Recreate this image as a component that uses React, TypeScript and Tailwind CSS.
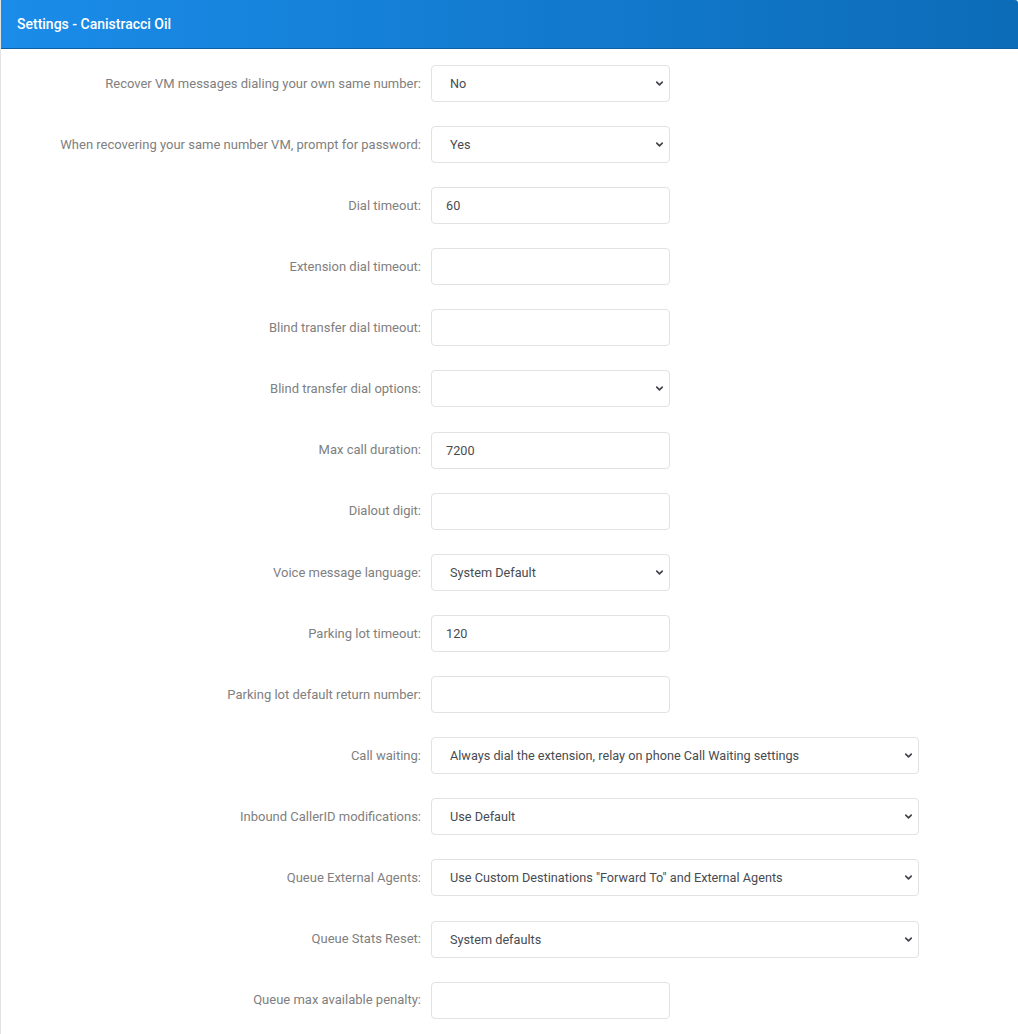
import { ChevronDown } from "lucide-react";

type Field = {
  label: string;
  kind: "select" | "input";
  value: string;
  wide?: boolean;
};

const fields: Field[] = [
  { label: "Recover VM messages dialing your own same number:", kind: "select", value: "No" },
  { label: "When recovering your same number VM, prompt for password:", kind: "select", value: "Yes" },
  { label: "Dial timeout:", kind: "input", value: "60" },
  { label: "Extension dial timeout:", kind: "input", value: "" },
  { label: "Blind transfer dial timeout:", kind: "input", value: "" },
  { label: "Blind transfer dial options:", kind: "select", value: "" },
  { label: "Max call duration:", kind: "input", value: "7200" },
  { label: "Dialout digit:", kind: "input", value: "" },
  { label: "Voice message language:", kind: "select", value: "System Default" },
  { label: "Parking lot timeout:", kind: "input", value: "120" },
  { label: "Parking lot default return number:", kind: "input", value: "" },
  {
    label: "Call waiting:",
    kind: "select",
    value: "Always dial the extension, relay on phone Call Waiting settings",
    wide: true,
  },
  { label: "Inbound CallerID modifications:", kind: "select", value: "Use Default", wide: true },
  {
    label: "Queue External Agents:",
    kind: "select",
    value: 'Use Custom Destinations "Forward To" and External Agents',
    wide: true,
  },
  { label: "Queue Stats Reset:", kind: "select", value: "System defaults", wide: true },
  { label: "Queue max available penalty:", kind: "input", value: "" },
];

const FieldRow = ({ field }: { field: Field }) => {
  const width = field.wide ? "w-[488px]" : "w-[239px]";
  return (
    <div className="flex items-center">
      <label className="w-[430px] shrink-0 pr-[10px] text-right text-[13px] text-[#808080]">
        {field.label}
      </label>
      {field.kind === "select" ? (
        <div className={`relative ${width}`}>
          <select
            defaultValue={field.value}
            className="h-[37px] w-full appearance-none rounded-[4px] border border-[#e2e2e2] bg-white pl-[18px] pr-8 text-[12.7px] text-[#474b51] outline-none"
          >
            <option value={field.value}>{field.value}</option>
          </select>
          <ChevronDown
            strokeWidth={3.5}
            className="pointer-events-none absolute right-[5px] top-[13px] h-[11px] w-[11px] text-[#3f434a]"
          />
        </div>
      ) : (
        <input
          type="text"
          defaultValue={field.value}
          className={`h-[37px] ${width} rounded-[4px] border border-[#e2e2e2] bg-white px-[14px] text-[12.7px] text-[#474b51] outline-none`}
        />
      )}
    </div>
  );
};

const App = () => {
  return (
    <div
      className="min-h-[1034px] w-[1018px] bg-white"
      style={{ fontFamily: "Roboto, 'Noto Sans', sans-serif" }}
    >
      <div className="rounded-tr-[3px] border-l border-[#e3e3e3]">
        {/* header */}
        <div className="flex h-[49px] items-center rounded-tr-[3px] border-b border-[#0a5fa6] bg-gradient-to-r from-[#1a8ce9] to-[#0c6cb8] px-4">
          <h2 className="text-[14px] font-medium text-white">Settings - Canistracci Oil</h2>
        </div>

        {/* form */}
        <form className="flex min-h-[985px] flex-col gap-y-[24.14px] pt-[15.8px]">
          {fields.map((f) => (
            <FieldRow key={f.label} field={f} />
          ))}
        </form>
      </div>
    </div>
  );
};

export default App;
